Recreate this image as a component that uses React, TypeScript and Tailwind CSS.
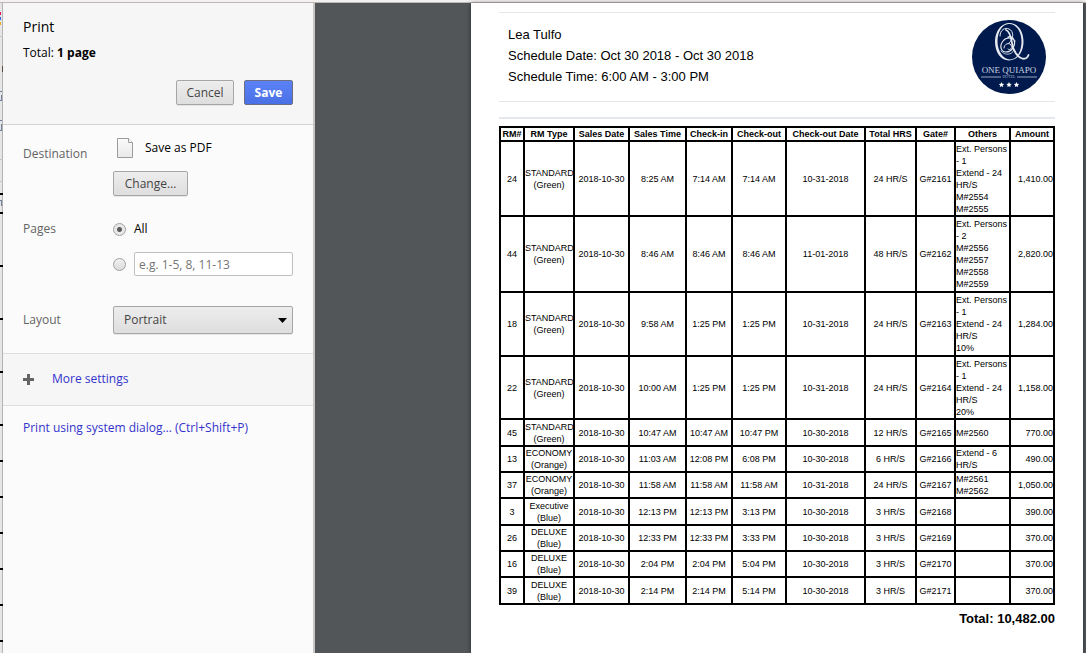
import React from "react";

type Row = {
  room: string;
  type: string;
  tint: string;
  time: string;
  checkIn: string;
  checkOut: string;
  outDate: string;
  hours: string;
  gate: string;
  others: string[];
  amount: string;
  height: string;
};

const rows: Row[] = [
  { room: "24", type: "STANDARD", tint: "Green", time: "8:25 AM", checkIn: "7:14 AM", checkOut: "7:14 AM", outDate: "10-31-2018", hours: "24", gate: "G#2161", others: ["Ext. Persons - 1", "Extend - 24 HR/S", "M#2554", "M#2555"], amount: "1,410.00", height: "h-[75px]" },
  { room: "44", type: "STANDARD", tint: "Green", time: "8:46 AM", checkIn: "8:46 AM", checkOut: "8:46 AM", outDate: "11-01-2018", hours: "48", gate: "G#2162", others: ["Ext. Persons - 2", "M#2556", "M#2557", "M#2558", "M#2559"], amount: "2,820.00", height: "h-[76px]" },
  { room: "18", type: "STANDARD", tint: "Green", time: "9:58 AM", checkIn: "1:25 PM", checkOut: "1:25 PM", outDate: "10-31-2018", hours: "24", gate: "G#2163", others: ["Ext. Persons - 1", "Extend - 24 HR/S", "10%"], amount: "1,284.00", height: "h-[64px]" },
  { room: "22", type: "STANDARD", tint: "Green", time: "10:00 AM", checkIn: "1:25 PM", checkOut: "1:25 PM", outDate: "10-31-2018", hours: "24", gate: "G#2164", others: ["Ext. Persons - 1", "Extend - 24 HR/S", "20%"], amount: "1,158.00", height: "h-[63px]" },
  { room: "45", type: "STANDARD", tint: "Green", time: "10:47 AM", checkIn: "10:47 AM", checkOut: "10:47 PM", outDate: "10-30-2018", hours: "12", gate: "G#2165", others: ["M#2560"], amount: "770.00", height: "h-[27px]" },
  { room: "13", type: "ECONOMY", tint: "Orange", time: "11:03 AM", checkIn: "12:08 PM", checkOut: "6:08 PM", outDate: "10-30-2018", hours: "6", gate: "G#2166", others: ["Extend - 6 HR/S"], amount: "490.00", height: "h-[26px]" },
  { room: "37", type: "ECONOMY", tint: "Orange", time: "11:58 AM", checkIn: "11:58 AM", checkOut: "11:58 AM", outDate: "10-31-2018", hours: "24", gate: "G#2167", others: ["M#2561", "M#2562"], amount: "1,050.00", height: "h-[26px]" },
  { room: "3", type: "Executive", tint: "Blue", time: "12:13 PM", checkIn: "12:13 PM", checkOut: "3:13 PM", outDate: "10-30-2018", hours: "3", gate: "G#2168", others: [], amount: "390.00", height: "h-[27px]" },
  { room: "26", type: "DELUXE", tint: "Blue", time: "12:33 PM", checkIn: "12:33 PM", checkOut: "3:33 PM", outDate: "10-30-2018", hours: "3", gate: "G#2169", others: [], amount: "370.00", height: "h-[26px]" },
  { room: "16", type: "DELUXE", tint: "Blue", time: "2:04 PM", checkIn: "2:04 PM", checkOut: "5:04 PM", outDate: "10-30-2018", hours: "3", gate: "G#2170", others: [], amount: "370.00", height: "h-[26px]" },
  { room: "39", type: "DELUXE", tint: "Blue", time: "2:14 PM", checkIn: "2:14 PM", checkOut: "5:14 PM", outDate: "10-30-2018", hours: "3", gate: "G#2171", others: [], amount: "370.00", height: "h-[27px]" },
];

const columns: [string, string][] = [
  ["RM#", "w-[24px]"],
  ["RM Type", "w-[50px]"],
  ["Sales Date", "w-[55px]"],
  ["Sales Time", "w-[57px]"],
  ["Check-in", "w-[46px]"],
  ["Check-out", "w-[54px]"],
  ["Check-out Date", "w-[79px]"],
  ["Total HRS", "w-[51px]"],
  ["Gate#", "w-[39px]"],
  ["Others", "w-[55px]"],
  ["Amount", "w-[44px]"],
];

const ruleMarks = [193, 212, 265, 318, 371, 424, 460, 496, 532, 568, 604, 640];

function PageBehind() {
  return (
    <svg width="3" height="650" viewBox="0 3 3 650" className="shrink-0" aria-hidden="true" shapeRendering="crispEdges">
      <rect width="3" height="653" fill="#e6e6e6" />
      <rect x="2" width="1" height="653" fill="#b4b4b4" />
      <rect y="12" width="1" height="3" fill="#e8114b" />
      <rect y="17" width="1" height="3" fill="#2d6cdf" />
      <rect y="22" width="1" height="3" fill="#f5a623" />
      <path d="M0 36.500h3M0 159.500h3M0 181.500h3" stroke="#c4c4c4" />
      <path d="M2.500 66v6" stroke="#5b4a3f" />
      <path d="M0 91.500h2M1.500 95v5M0 100.500h2M0 120.500h2M1.500 124v6M0 130.500h2M0 200.500h2M1.500 201v5" stroke="#6f7f9c" fill="none" />
      {ruleMarks.map((y) => (
        <rect key={y} y={y} width="3" height="2" fill="#000" />
      ))}
    </svg>
  );
}

function HotelLogo() {
  return (
    <svg width="76" height="76" viewBox="0 0 76 76" role="img" aria-label="One Quiapo Hotel" className="shrink-0">
      <circle cx="38" cy="38" r="37" fill="#001a4d" />
      <path
        fill="#e6e9f0"
        fillRule="evenodd"
        d="M38.500 4c8 0 14 8 14 18.500S46.500 41.500 38 41.500 24 33 24 22.500 30.500 4 38.500 4zM37.500 5C31 5.500 26.500 13 26.500 22.500S32 40.500 39 40.500s11.500-8 11.500-18S45 4.500 37.500 5z"
      />
      <g fill="none" stroke="#e6e9f0" strokeLinecap="round">
        <path d="M29 17c0-6 5-9 9-7 5 2 5 10 0 14" strokeWidth="1" />
        <path d="M35 11c4 1 5 8 6 13 1 7 5 14 10 15.500 3 .8 5.500-1 6.500-3.500" strokeWidth="1.800" />
        <path d="M44 22c-3-4-9-4-12 0-4 5-2 11 3 11 6 0 10-7 8-12-1-3-4-4-6-3" strokeWidth="1.200" />
        <path d="M33 29c0-4 5-6 7-3s-1 6-3 4" strokeWidth="1" />
        <path d="M30 32c4 5 11 4 13-1" strokeWidth="0.800" />
      </g>
      <text x="38" y="54" textAnchor="middle" fontSize="9" fill="#c9d1e0" fontFamily="Liberation Serif, serif">ONE QUIAPO</text>
      <path d="M10 58h20M46 58h20" stroke="#c3ccdc" strokeWidth="0.800" />
      <text x="38" y="59" textAnchor="middle" fontSize="4" fill="#aeb8cc" fontFamily="Liberation Serif, serif">HOTEL</text>
      {[30.5, 38, 45.5].map((x) => (
        <path key={x} transform={`translate(${x} 65.5)`} d="M0-2.500l.8 1.700 1.900.2-1.400 1.300.4 1.900L0 1.700l-1.700.9.4-1.900-1.400-1.300 1.900-.2z" fill="#fff" />
      ))}
    </svg>
  );
}

const button =
  "rounded-[2px] border border-[#a6a6a6] bg-linear-to-b from-[#ededed] to-[#dedede] text-[#444] shadow-[0_1px_0_rgba(0,0,0,0.08)]";
const radio =
  "size-[13px] shrink-0 appearance-none rounded-full border border-[#a0a0a0] bg-linear-to-b from-[#f0f0f0] to-[#dcdcdc] checked:bg-[radial-gradient(circle,#5a5a5a_0_2px,#e8e8e8_3px)]";

function PrintPanel() {
  return (
    <aside className="flex w-[312px] shrink-0 flex-col border-r-2 border-[#c6c6c6] bg-[#fbfbfb] font-['Open_Sans','Noto_Sans',sans-serif] text-[12px] leading-4">
      <header className="border-b border-[#d2d2d2] bg-[#f6f6f6] px-5 pt-[14px] pb-[19px]">
        <h1 className="text-[14px] leading-5">Print</h1>
        <p className="mt-2">
          Total: <b>1 page</b>
        </p>
        <div className="mt-[19px] flex justify-end gap-[10px]">
          <button type="button" className={`h-[25px] w-[58px] ${button}`}>Cancel</button>
          <button
            type="button"
            className="h-[25px] w-[49px] rounded-[2px] border border-[#6b6f80] bg-linear-to-b from-[#5c82f8] to-[#4a70e6] font-bold text-white"
          >
            Save
          </button>
        </div>
      </header>

      <div className="grid grid-cols-[90px_minmax(0,1fr)] px-5 pt-3 pb-[19px] text-[#646464]">
        <span className="pt-[9px]">Destination</span>
        <div>
          <div className="flex items-center gap-[11px] pl-[3px] text-black">
            <svg width="18" height="22" viewBox="0 0 18 22" aria-hidden="true">
              <defs>
                <linearGradient id="sheet" x2="0" y2="1">
                  <stop stopColor="#fafafa" />
                  <stop offset="1" stopColor="#e9e9e9" />
                </linearGradient>
              </defs>
              <path d="M1.500 1.500h11l4 4v15h-15z" fill="url(#sheet)" stroke="#9c9c9c" />
              <path d="M12.500 1.500v4h4" fill="#fff" stroke="#9c9c9c" />
            </svg>
            <span>Save as PDF</span>
          </div>
          <button type="button" className={`mt-3 h-[25px] w-[75px] ${button}`}>Change…</button>
        </div>

        <span className="mt-[25px]">Pages</span>
        <div className="mt-[25px]">
          <label className="flex items-center gap-2 text-black">
            <input type="radio" name="pages" defaultChecked className={radio} />
            All
          </label>
          <div className="mt-[15px] flex items-center gap-2">
            <input type="radio" name="pages" aria-label="Page range" className={radio} />
            <input
              type="text"
              aria-label="Pages to print"
              placeholder="e.g. 1-5, 8, 11-13"
              className="h-6 min-w-0 flex-1 rounded-[2px] border border-[#bfbfbf] bg-white px-1 placeholder:text-[#757575]"
            />
          </div>
        </div>

        <label htmlFor="layout" className="mt-[30px] pt-[6px]">Layout</label>
        <div className="relative mt-[30px]">
          <select id="layout" className={`h-7 w-full appearance-none px-[10px] ${button}`}>
            <option>Portrait</option>
            <option>Landscape</option>
          </select>
          <svg width="9" height="5" viewBox="0 0 9 5" aria-hidden="true" className="pointer-events-none absolute top-[12px] right-[6px]">
            <path d="M0 0h9L4.500 5z" />
          </svg>
        </div>
      </div>

      <div className="border-y border-[#dedede] bg-[#f6f6f6] px-5 pt-[17px] pb-[18px]">
        <button type="button" className="flex items-center gap-[18px] text-[#3333cc]">
          <svg width="11" height="11" viewBox="0 0 11 11" aria-hidden="true">
            <path d="M0 5.500h11M5.500 0v11" stroke="#646464" strokeWidth="3" />
          </svg>
          More settings
        </button>
      </div>
      <a href="#system-dialog" className="mx-5 mt-[14px] whitespace-nowrap text-[#3333cc]">
        Print using system dialog… (Ctrl+Shift+P)
      </a>
    </aside>
  );
}

function Report() {
  return (
    <article className="flex-1 bg-white px-7 pt-[9px] font-['Liberation_Sans',sans-serif] text-black shadow-[0_0_4px_rgba(0,0,0,0.5)]">
      <header className="flex items-start justify-between border-y border-[#e6e6e6] py-[6px] pr-2 pl-[9px]">
        <div className="pt-[5px] text-[13px] leading-[21px]">
          <p>Lea Tulfo</p>
          <p>Schedule Date: Oct 30 2018 - Oct 30 2018</p>
          <p>Schedule Time: 6:00 AM - 3:00 PM</p>
        </div>
        <HotelLogo />
      </header>
      <hr className="mt-[15px] border-t-2 border-[#e4e8ec]" />
      <table className="mt-[7px] w-full table-fixed border-collapse text-center text-[9px] leading-[12px]">
        <thead>
          <tr className="h-[14px]">
            {columns.map(([label, width]) => (
              <th key={label} className={`border-2 border-black p-0 whitespace-nowrap ${width}`}>{label}</th>
            ))}
          </tr>
        </thead>
        <tbody className="[&_td]:border-2 [&_td]:border-black [&_td]:p-0">
          {rows.map((r) => (
            <tr key={r.gate} className={r.height}>
              <td>{r.room}</td>
              <td>
                {r.type}
                <br />({r.tint})
              </td>
              <td className="whitespace-nowrap">2018-10-30</td>
              <td>{r.time}</td>
              <td className="whitespace-nowrap">{r.checkIn}</td>
              <td>{r.checkOut}</td>
              <td>{r.outDate}</td>
              <td>{r.hours} HR/S</td>
              <td>{r.gate}</td>
              <td className="text-left">
                {r.others.map((o) => (
                  <div key={o}>{o}</div>
                ))}
              </td>
              <td className="text-right">{r.amount}</td>
            </tr>
          ))}
        </tbody>
      </table>
      <p className="mt-[5px] text-right text-[13px] leading-[18px] font-bold">Total: 10,482.00</p>
    </article>
  );
}

export default function App() {
  return (
    <div className="flex min-h-screen flex-col overflow-hidden">
      <div className="h-[3px] shrink-0 border-b border-[#bdb8b8] bg-[#f2f1f0]" />
      <div className="flex flex-1">
        <PageBehind />
        <PrintPanel />
        <main className="flex min-w-0 flex-1 bg-[#525659] pr-[3px] pl-[156px]">
          <Report />
        </main>
      </div>
    </div>
  );
}
